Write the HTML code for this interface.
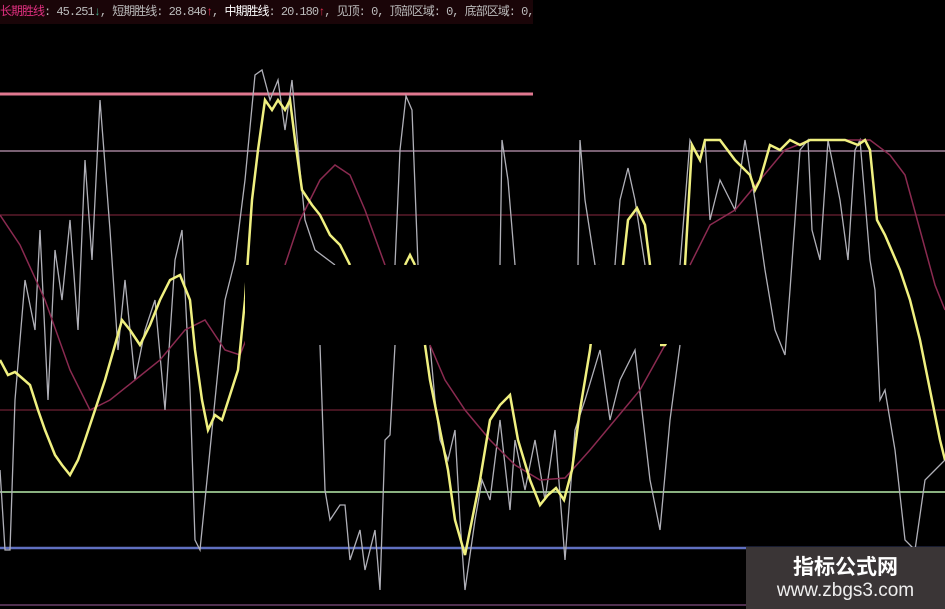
<!DOCTYPE html>
<html><head><meta charset="utf-8"><style>
html,body{margin:0;padding:0;background:#000;width:945px;height:609px;overflow:hidden}
.hdr{position:absolute;left:0;top:0;width:533px;height:24px;background:#1a0508;font:12px "Liberation Mono","Noto Sans CJK SC",monospace;color:#bbb;line-height:24px;white-space:nowrap;letter-spacing:-1px}
.wm{position:absolute;left:746px;top:547px;width:199px;height:62px;background:#3a3536}
.wm .a{position:absolute;left:0;width:199px;top:4px;text-align:center;font:bold 21px "Noto Sans CJK SC",sans-serif;color:#fff}
.wm .b{position:absolute;left:0;width:199px;top:33px;text-align:center;font:19px "Liberation Sans",sans-serif;color:#eee}
</style></head><body>
<svg width="945" height="609" style="position:absolute;left:0;top:0">
<line x1="0" y1="94" x2="533" y2="94" stroke="#e07890" stroke-width="3"/>
<line x1="0" y1="151" x2="945" y2="151" stroke="#a08098" stroke-width="1.5"/>
<line x1="0" y1="215" x2="945" y2="215" stroke="#5a1a2a" stroke-width="1.5"/>
<line x1="0" y1="410" x2="945" y2="410" stroke="#5a1a2a" stroke-width="1.5"/>
<line x1="0" y1="492" x2="945" y2="492" stroke="#8ab080" stroke-width="2"/>
<line x1="0" y1="548" x2="945" y2="548" stroke="#6070c0" stroke-width="2.5"/>
<line x1="0" y1="605" x2="945" y2="605" stroke="#503050" stroke-width="2"/>
<polyline fill="none" stroke="#b0b0b8" stroke-width="1.3" points="0,470 5,550 10,550 15,400 25,280 35,330 40,230 48,400 55,250 62,300 70,220 78,330 85,160 92,260 100,100 110,230 118,350 125,280 135,380 145,330 155,300 165,410 175,260 182,230 190,390 195,540 200,550 210,450 225,300 235,260 245,180 255,75 262,70 270,100 278,80 285,130 292,80 300,170 305,220 315,250 335,265"/>
<polyline fill="none" stroke="#b0b0b8" stroke-width="1.3" points="395,265 400,150 406,96 412,110 418,265"/>
<polyline fill="none" stroke="#b0b0b8" stroke-width="1.3" points="320,345 325,490 330,520 340,505 345,505 350,560 360,530 365,570 375,530 380,590 385,440 390,435 395,345"/>
<polyline fill="none" stroke="#b0b0b8" stroke-width="1.3" points="500,265 502,140 508,180 515,265"/>
<polyline fill="none" stroke="#b0b0b8" stroke-width="1.3" points="578,265 580,140 585,200 595,265"/>
<polyline fill="none" stroke="#b0b0b8" stroke-width="1.3" points="615,265 620,200 628,168 635,200 645,265"/>
<polyline fill="none" stroke="#b0b0b8" stroke-width="1.3" points="680,265 690,140 700,160 705,140 710,220 720,180 735,210 745,140 755,200 765,270 775,330 785,355 790,290 800,150 808,140 812,230 820,260 828,140 840,200 848,260 855,150 860,140 870,260 875,290 880,400 885,390 895,450 905,540 915,550 925,480 935,470 945,460"/>
<polyline fill="none" stroke="#b0b0b8" stroke-width="1.3" points="430,345 435,400 440,440 448,460 455,430 460,520 465,590 475,520 482,480 490,500 500,420 510,510 515,440 525,490 535,440 545,500 555,430 565,560 575,430 585,400 600,350 610,420 620,380 635,350 650,480 660,530 670,420 680,345"/>
<polyline fill="none" stroke="#8a2a50" stroke-width="1.5" points="0,215 20,245 45,300 70,370 90,410 110,400 135,380 160,360 185,330 205,320 225,350 240,355 250,330"/>
<polyline fill="none" stroke="#8a2a50" stroke-width="1.5" points="285,265 300,220 320,180 335,165 350,175 365,210 385,265"/>
<polyline fill="none" stroke="#8a2a50" stroke-width="1.5" points="430,345 445,380 465,410 490,440 515,465 540,480 565,478 590,450 615,420 640,390 665,345"/>
<polyline fill="none" stroke="#8a2a50" stroke-width="1.5" points="690,265 710,225 735,210 760,180 785,150 810,140 870,140 890,155 905,175 920,230 935,285 945,310"/>
<polyline fill="none" stroke="#f0f080" stroke-width="2.5" points="0,360 8,375 15,372 22,378 30,385 38,410 45,430 55,455 62,465 70,475 78,460 85,440 95,410 105,380 115,345 122,320 130,330 140,345 150,325 160,300 170,280 180,275 190,300 195,350 202,400 208,430 215,415 222,420 230,395 238,370 245,300 252,200 258,150 265,100 272,110 278,100 285,110 290,100 295,140 302,190 312,205 320,215 330,235 340,245 350,265"/>
<polyline fill="none" stroke="#f0f080" stroke-width="2.5" points="405,265 410,255 415,265"/>
<polyline fill="none" stroke="#f0f080" stroke-width="2.5" points="425,345 430,380 440,430 448,470 455,520 465,555 472,520 480,480 490,420 500,405 510,395 518,440 530,480 540,505 548,495 556,488 564,500 572,470 580,410 590,350 600,265"/>
<polyline fill="none" stroke="#f0f080" stroke-width="2.5" points="623,265 628,220 637,208 645,225 650,265"/>
<polyline fill="none" stroke="#f0f080" stroke-width="2.5" points="660,345 665,345 668,340"/>
<polyline fill="none" stroke="#f0f080" stroke-width="2.5" points="685,265 692,145 700,160 705,140 720,140 735,160 750,175 755,190 760,180 770,145 780,150 790,140 800,145 810,140 845,140 858,145 865,140 870,150 877,220 885,235 900,270 910,300 920,340 930,390 940,440 945,460"/>
<rect x="245" y="265" width="435" height="79" fill="#000"/>
</svg>
<div class="hdr"><span style="color:#e03080">长期胜线</span>: 45.251<span style="color:#4a8">↓</span>, 短期胜线: 28.846<span style="color:#e03050">↑</span>, <span style="color:#fff">中期胜线</span>: 20.180<span style="color:#e03050">↑</span>, 见顶: 0, 顶部区域: 0, 底部区域: 0,</div>
<div class="wm"><div class="a">指标公式网</div><div class="b">www.zbgs3.com</div></div>
</body></html>
